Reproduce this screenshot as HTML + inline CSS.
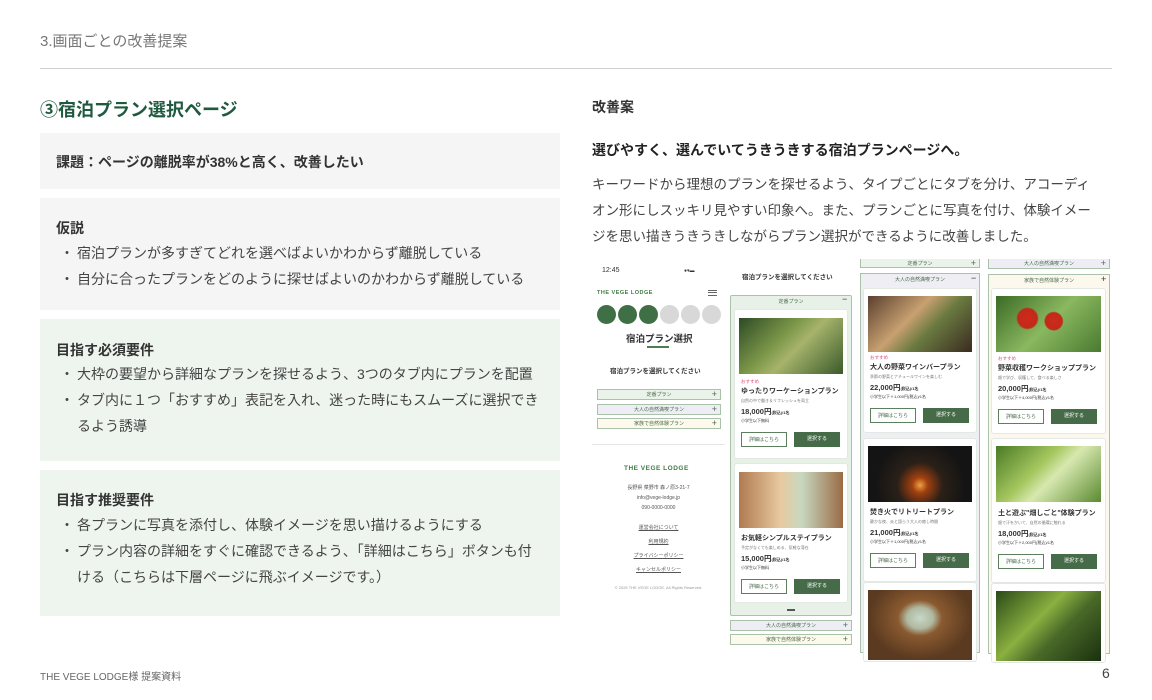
<!DOCTYPE html><html><head><meta charset="utf-8"><style>
*{margin:0;padding:0;box-sizing:border-box}
body{width:1152px;height:700px;background:#fff;font-family:"Liberation Sans","Noto Sans CJK JP",sans-serif;color:#333;position:relative;overflow:hidden}
.a{position:absolute;white-space:nowrap}
.box{position:absolute;left:40px;width:520px;background:#f5f5f5}
.g{background:#eef5ee}
.bh{position:absolute;left:16px;font-size:14px;font-weight:bold;color:#333}
.li{position:absolute;left:20px;font-size:14px;color:#444;line-height:26px}
.li span{display:inline-block;width:17px}
.card{position:absolute;background:#fff;border-radius:3px;border:1px solid #e3e8e3}
.img{position:absolute;left:4px;right:4px;height:56px}
.t{position:absolute;left:6px;white-space:nowrap;color:#333}
.btn{position:absolute;width:46px;height:15px;font-size:5px;text-align:center;line-height:15px}
.b1{left:6px;border:1px solid #5c7f5e;color:#4a6a4c;background:#fff}
.b2{left:59px;background:#466b48;color:#fff}
.tab{position:absolute;height:11px;font-size:5px;text-align:center;line-height:10px;color:#4b6b4b;border:1px solid #a9c2a9}
.tab b{position:absolute;right:3px;top:0;font-size:9px;font-weight:normal;line-height:9px}
</style></head><body>
<div class="a" style="left:40px;top:30px;font-size:15px;color:#777">3.画面ごとの改善提案</div>
<div class="a" style="left:40px;top:68px;width:1072px;height:1px;background:#d0d0d0"></div>

<div class="a" style="left:40px;top:96px;font-size:18px;font-weight:bold;color:#1f5a3f">③宿泊プラン選択ページ</div>
<div class="box" style="top:133px;height:56px"><div class="bh" style="top:19px">課題：ページの離脱率が38%と高く、改善したい</div></div>
<div class="box" style="top:198px;height:112px"><div class="bh" style="top:20px">仮説</div>
<div class="li" style="top:42px"><span>・</span>宿泊プランが多すぎてどれを選べばよいかわからず離脱している<br><span>・</span>自分に合ったプランをどのように探せばよいのかわからず離脱している</div></div>
<div class="box g" style="top:319px;height:142px"><div class="bh" style="top:21px">目指す必須要件</div>
<div class="li" style="top:42px"><span>・</span>大枠の要望から詳細なプランを探せるよう、3つのタブ内にプランを配置<br><span>・</span>タブ内に１つ「おすすめ」表記を入れ、迷った時にもスムーズに選択でき<br><span></span>るよう誘導</div></div>
<div class="box g" style="top:470px;height:146px"><div class="bh" style="top:20px">目指す推奨要件</div>
<div class="li" style="top:42px"><span>・</span>各プランに写真を添付し、体験イメージを思い描けるようにする<br><span>・</span>プラン内容の詳細をすぐに確認できるよう、「詳細はこちら」ボタンも付<br><span></span>ける（こちらは下層ページに飛ぶイメージです。）</div></div>

<div class="a" style="left:592px;top:97px;font-size:14px;font-weight:bold">改善案</div>
<div class="a" style="left:592px;top:140px;font-size:14px;font-weight:bold;color:#222">選びやすく、選んでいてうきうきする宿泊プランページへ。</div>
<div class="a" style="left:592px;top:172px;font-size:13.5px;line-height:26px;color:#444">キーワードから理想のプランを探せるよう、タイプごとにタブを分け、アコーディ<br>オン形にしスッキリ見やすい印象へ。また、プランごとに写真を付け、体験イメー<br>ジを思い描きうきうきしながらプラン選択ができるように改善しました。</div>

<!-- col1 -->
<div class="a" style="left:602px;top:267px;font-size:7px">12:45</div>
<div class="a" style="left:684px;top:268px;font-size:5px">●▾▬</div>
<div class="a" style="left:597px;top:290px;font-size:5.5px;font-weight:bold;color:#3f7a45;letter-spacing:.5px">THE VEGE LODGE</div>
<div class="a" style="left:708px;top:290px;width:9px;height:6px;border-top:1px solid #666;border-bottom:1px solid #666"></div>
<div class="a" style="left:708px;top:292px;width:9px;height:1px;background:#666"></div>
<div class="a" style="left:597px;top:305px;width:124px;height:19px">
<div class="a" style="left:0;top:0;width:19px;height:19px;border-radius:50%;background:#3f7045"></div>
<div class="a" style="left:21px;top:0;width:19px;height:19px;border-radius:50%;background:#3f7045"></div>
<div class="a" style="left:42px;top:0;width:19px;height:19px;border-radius:50%;background:#3f7045"></div>
<div class="a" style="left:63px;top:0;width:19px;height:19px;border-radius:50%;background:#d8d8d8"></div>
<div class="a" style="left:84px;top:0;width:19px;height:19px;border-radius:50%;background:#d8d8d8"></div>
<div class="a" style="left:105px;top:0;width:19px;height:19px;border-radius:50%;background:#d8d8d8"></div></div>
<div class="a" style="left:626px;top:331px;font-size:9.5px;font-weight:bold">宿泊プラン選択</div>
<div class="a" style="left:647px;top:346px;width:22px;height:2px;background:#4d7d52"></div>
<div class="a" style="left:610px;top:365px;font-size:6.5px;font-weight:bold">宿泊プランを選択してください</div>
<div class="tab" style="left:597px;top:389px;width:124px;background:#eaf3ea">定番プラン<b>+</b></div>
<div class="tab" style="left:597px;top:404px;width:124px;background:#eeedf5">大人の自然満喫プラン<b>+</b></div>
<div class="tab" style="left:597px;top:418px;width:124px;background:#fdf9ec">家族で自然体験プラン<b>+</b></div>
<div class="a" style="left:592px;top:444px;width:133px;height:1px;background:#e6e6e6"></div>
<div class="a" style="left:624px;top:465px;font-size:6.5px;font-weight:bold;color:#3f7a45;letter-spacing:.5px">THE VEGE LODGE</div>
<div class="a" style="left:592px;top:483px;width:133px;text-align:center;font-size:5px;line-height:10px;color:#555">長野県 菜野市 森ノ原3-21-7<br>info@vege-lodge.jp<br>090-0000-0000</div>
<div class="a" style="left:592px;top:521px;width:133px;text-align:center;font-size:5px;line-height:14px;color:#555;text-decoration:underline">運営会社について<br>利用規約<br>プライバシーポリシー<br>キャンセルポリシー</div>
<div class="a" style="left:592px;top:585px;width:133px;text-align:center;font-size:4px;color:#999">© 2025 THE VEGE LODGE. All Rights Reserved.</div>

<!-- col2 -->
<div class="a" style="left:742px;top:271px;font-size:6.5px;font-weight:bold">宿泊プランを選択してください</div>
<div class="a" style="left:730px;top:295px;width:122px;height:321px;background:#e8f1e8;border:1px solid #a9c2a9;border-radius:2px"></div>
<div class="a" style="left:730px;top:298px;width:122px;text-align:center;font-size:5px;color:#4b6b4b">定番プラン</div>
<div class="a" style="left:842px;top:294px;font-size:9px">−</div>
<div class="card" style="left:734px;top:309px;width:114px;height:150px">
<div class="img" style="top:8px;background:linear-gradient(135deg,#2d4a25,#7f9a4a 40%,#a6b36b 55%,#3a5a2a)"></div>
<div class="t" style="top:69px;font-size:4.5px;color:#e0507a">おすすめ</div>
<div class="t" style="top:76px;font-size:7px;font-weight:bold">ゆったりワーケーションプラン</div>
<div class="t" style="top:88px;font-size:4px;color:#777">自然の中で働き＆リフレッシュを両立</div>
<div class="t" style="top:96px;font-size:7.5px;font-weight:bold">18,000円<small style="font-size:4px">(税込)/1名</small></div>
<div class="t" style="top:108px;font-size:4px">小学生以下無料</div>
<div class="btn b1" style="top:122px">詳細はこちら</div><div class="btn b2" style="top:122px">選択する</div></div>
<div class="card" style="left:734px;top:463px;width:114px;height:140px">
<div class="img" style="top:8px;background:linear-gradient(90deg,#b07a50,#e8c9a0 40%,#c8d8c0 60%,#9a6b45)"></div>
<div class="t" style="top:69px;font-size:7px;font-weight:bold">お気軽シンプルステイプラン</div>
<div class="t" style="top:81px;font-size:4px;color:#777">予定がなくても楽しめる、気軽な滞在</div>
<div class="t" style="top:89px;font-size:7.5px;font-weight:bold">15,000円<small style="font-size:4px">(税込)/1名</small></div>
<div class="t" style="top:101px;font-size:4px">小学生以下無料</div>
<div class="btn b1" style="top:115px">詳細はこちら</div><div class="btn b2" style="top:115px">選択する</div></div>
<div class="a" style="left:787px;top:609px;width:8px;height:1.5px;background:#555"></div>
<div class="tab" style="left:730px;top:620px;width:122px;background:#eeedf5">大人の自然満喫プラン<b>+</b></div>
<div class="tab" style="left:730px;top:634px;width:122px;background:#fdf9ec">家族で自然体験プラン<b>+</b></div>

<!-- col3 -->
<div class="tab" style="left:860px;top:259px;width:120px;height:9px;background:#eaf3ea;border-top:none">定番プラン<b>+</b></div>
<div class="a" style="left:860px;top:273px;width:120px;height:380px;background:#efeef5;border:1px solid #a9c2a9"></div>
<div class="a" style="left:860px;top:276px;width:120px;text-align:center;font-size:5px;color:#4b6b4b">大人の自然満喫プラン</div>
<div class="a" style="left:971px;top:273px;font-size:9px">−</div>
<div class="card" style="left:863px;top:288px;width:114px;height:145px">
<div class="img" style="top:7px;background:linear-gradient(135deg,#5a4030,#c8a070 40%,#6a7a40 60%,#3a2a20)"></div>
<div class="t" style="top:66px;font-size:4.5px;color:#e0507a">おすすめ</div>
<div class="t" style="top:73px;font-size:7px;font-weight:bold">大人の野菜ワインバープラン</div>
<div class="t" style="top:85px;font-size:4px;color:#777">季節の野菜とナチュールワインを楽しむ</div>
<div class="t" style="top:93px;font-size:7.5px;font-weight:bold">22,000円<small style="font-size:4px">(税込)/1名</small></div>
<div class="t" style="top:105px;font-size:4px">小学生以下＋1,000円(税込)/1名</div>
<div class="btn b1" style="top:119px">詳細はこちら</div><div class="btn b2" style="top:119px">選択する</div></div>
<div class="card" style="left:863px;top:438px;width:114px;height:144px">
<div class="img" style="top:7px;background:radial-gradient(circle at 50% 70%,#f0a040 0,#a04010 12%,#2a2018 35%,#141414 70%)"></div>
<div class="t" style="top:68px;font-size:7px;font-weight:bold">焚き火でリトリートプラン</div>
<div class="t" style="top:80px;font-size:4px;color:#777">静かな夜、炎と語らう大人の癒し時間</div>
<div class="t" style="top:88px;font-size:7.5px;font-weight:bold">21,000円<small style="font-size:4px">(税込)/1名</small></div>
<div class="t" style="top:100px;font-size:4px">小学生以下＋1,000円(税込)/1名</div>
<div class="btn b1" style="top:114px">詳細はこちら</div><div class="btn b2" style="top:114px">選択する</div></div>
<div class="card" style="left:863px;top:582px;width:114px;height:80px">
<div class="img" style="top:7px;height:70px;background:radial-gradient(ellipse at 50% 40%,#c8d8c8 0,#b0b8a0 18%,#8a5a30 30%,#5a3a20 70%)"></div></div>

<!-- col4 -->
<div class="tab" style="left:988px;top:259px;width:122px;height:10px;background:#eeedf5;border-top:none">大人の自然満喫プラン<b>+</b></div>
<div class="a" style="left:988px;top:274px;width:122px;height:380px;background:#fcf8ee;border:1px solid #a9c2a9"></div>
<div class="a" style="left:988px;top:277px;width:122px;text-align:center;font-size:5px;color:#4b6b4b">家族で自然体験プラン</div>
<div class="a" style="left:1101px;top:274px;font-size:9px">+</div>
<div class="card" style="left:991px;top:288px;width:115px;height:146px">
<div class="img" style="top:7px;background:radial-gradient(circle at 30% 40%,#d02a1a 0,#c02a1a 12%,transparent 14%),radial-gradient(circle at 55% 45%,#d02a1a 0,#c02a1a 13%,transparent 15%),linear-gradient(135deg,#3a6a25,#8ab860 50%,#4a7a30)"></div>
<div class="t" style="top:67px;font-size:4.5px;color:#e0507a">おすすめ</div>
<div class="t" style="top:74px;font-size:7px;font-weight:bold">野菜収穫ワークショッププラン</div>
<div class="t" style="top:86px;font-size:4px;color:#777">畑で学び、収穫して、食べる楽しさ</div>
<div class="t" style="top:94px;font-size:7.5px;font-weight:bold">20,000円<small style="font-size:4px">(税込)/1名</small></div>
<div class="t" style="top:106px;font-size:4px">小学生以下＋4,000円(税込)/1名</div>
<div class="btn b1" style="top:120px">詳細はこちら</div><div class="btn b2" style="top:120px">選択する</div></div>
<div class="card" style="left:991px;top:438px;width:115px;height:145px">
<div class="img" style="top:7px;background:linear-gradient(135deg,#4a7a25,#a6c860 40%,#d8e8b0 55%,#5a8a30)"></div>
<div class="t" style="top:69px;font-size:7px;font-weight:bold">土と遊ぶ"畑しごと"体験プラン</div>
<div class="t" style="top:81px;font-size:4px;color:#777">畑で汗をかいて、自然の循環に触れる</div>
<div class="t" style="top:89px;font-size:7.5px;font-weight:bold">18,000円<small style="font-size:4px">(税込)/1名</small></div>
<div class="t" style="top:101px;font-size:4px">小学生以下＋2,000円(税込)/1名</div>
<div class="btn b1" style="top:115px">詳細はこちら</div><div class="btn b2" style="top:115px">選択する</div></div>
<div class="card" style="left:991px;top:583px;width:115px;height:80px">
<div class="img" style="top:7px;height:70px;background:linear-gradient(135deg,#2a4a18,#8ab040 40%,#4a6a28 60%,#1a3010)"></div></div>

<div class="a" style="left:40px;top:668px;font-size:10px;color:#666">THE VEGE LODGE様 提案資料</div>
<div class="a" style="left:1102px;top:665px;font-size:14px;color:#444">6</div>
</body></html>
